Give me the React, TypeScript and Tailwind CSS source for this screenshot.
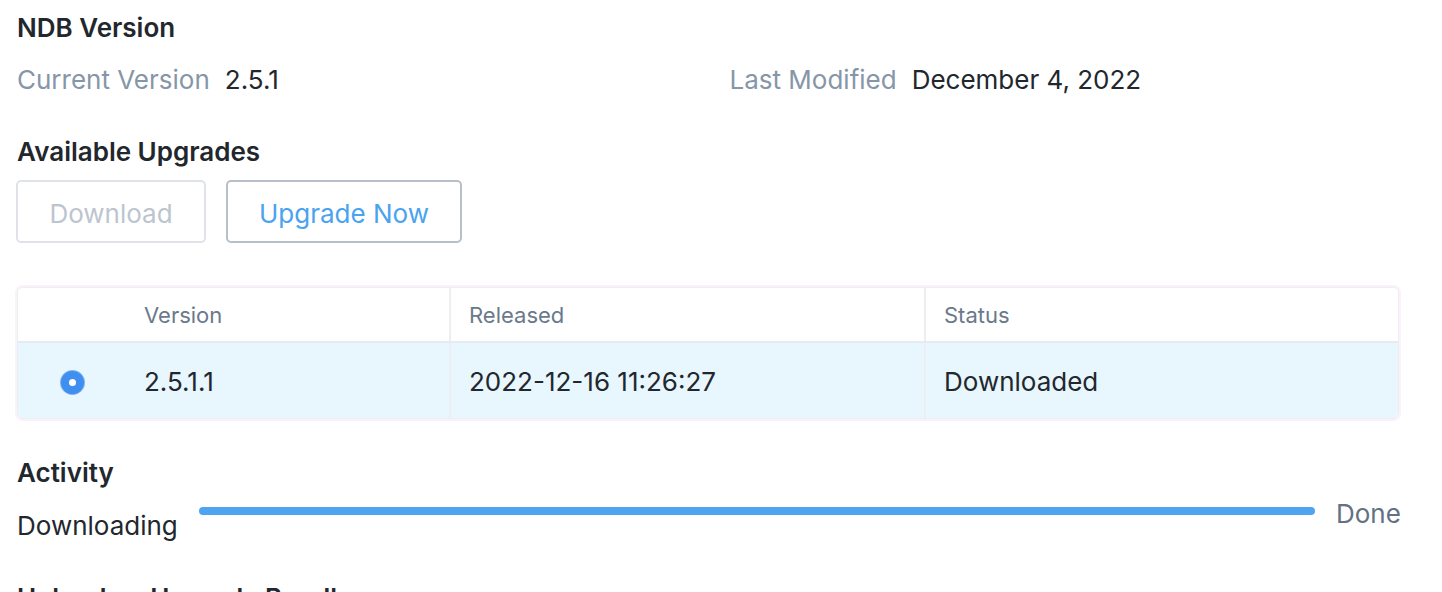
import React from "react";

export default function App() {
  return (
    <div
      className="w-[1442px] h-[592px] overflow-hidden bg-white pl-[17px] text-[#22272e]"
      style={{ fontFamily: "Inter, 'Noto Sans', sans-serif" }}
    >
      <div className="pt-[13px] text-[26px] leading-[30px] font-semibold">NDB Version</div>

      <div className="mt-[22px] grid grid-cols-2 text-[26px] leading-[30px]">
        <div className="flex gap-[15px]">
          <span className="text-[#8696a8]">Current Version</span>
          <span>2.5.1</span>
        </div>
        <div className="flex gap-[15px]">
          <span className="text-[#8696a8]">Last Modified</span>
          <span>December 4, 2022</span>
        </div>
      </div>

      <div className="mt-[42px] text-[26px] leading-[30px] font-semibold">Available Upgrades</div>

      <div className="mt-[13px] flex gap-[20px] -ml-px">
        <button className="h-[63px] w-[190px] pt-[4px] rounded-[5px] border-2 border-[#dfe3e8] text-[26px] text-[#bcc5cf]">
          Download
        </button>
        <button className="h-[63px] w-[236px] pt-[4px] rounded-[5px] border-2 border-[#b7bfc9] text-[26px] text-[#4aa3ef]">
          Upgrade Now
        </button>
      </div>

      <div className="mt-[44px] w-[1382px] rounded-[6px] border border-[#eceef1] shadow-[0_0_0_2px_#fbf1f8] overflow-hidden">
        <div className="grid grid-cols-[108px_323px_475px_1fr] h-[53px] items-center bg-white text-[22px] text-[#6a798b]">
          <div className="h-full"></div>
          <div className="pl-[18px] h-full flex items-center pt-[2px]">Version</div>
          <div className="pl-[18px] h-full flex items-center pt-[2px] border-l-2 border-[#eceef1]">Released</div>
          <div className="pl-[18px] h-full flex items-center pt-[2px] border-l-2 border-[#eceef1]">Status</div>
        </div>
        <div className="grid grid-cols-[108px_323px_475px_1fr] h-[77px] items-center bg-[#e8f6fe] border-t-2 border-[#e6ebef] text-[26px]">
          <div className="h-full flex items-center justify-center pt-[4px]">
            <span className="flex h-[23px] w-[23px] items-center justify-center rounded-full bg-[#3f8ff0] shadow-[0_0_0_1px_#7fb3f3]">
              <span className="h-[7px] w-[7px] rounded-full bg-white"></span>
            </span>
          </div>
          <div className="pl-[18px] h-full flex items-center pt-[2px]">2.5.1.1</div>
          <div className="pl-[18px] h-full flex items-center pt-[2px] border-l-2 border-[#eceef1]">2022-12-16 11:26:27</div>
          <div className="pl-[18px] h-full flex items-center pt-[2px] border-l-2 border-[#eceef1]">Downloaded</div>
        </div>
      </div>

      <div className="mt-[39px] text-[26px] leading-[30px] font-semibold">Activity</div>

      <div className="mt-[10px] flex items-start">
        <div className="mt-[13px] w-[182px] text-[26px] leading-[30px]">Downloading</div>
        <div className="mt-[9px] h-[8px] w-[1116px] rounded-full bg-[#4ea4ee]"></div>
        <div className="ml-[21px] mt-[1px] text-[26px] leading-[30px] text-[#627184]">Done</div>
      </div>

      <div className="mt-[42px] text-[26px] leading-[30px] font-semibold">Upload an Upgrade Bundle</div>
    </div>
  );
}
